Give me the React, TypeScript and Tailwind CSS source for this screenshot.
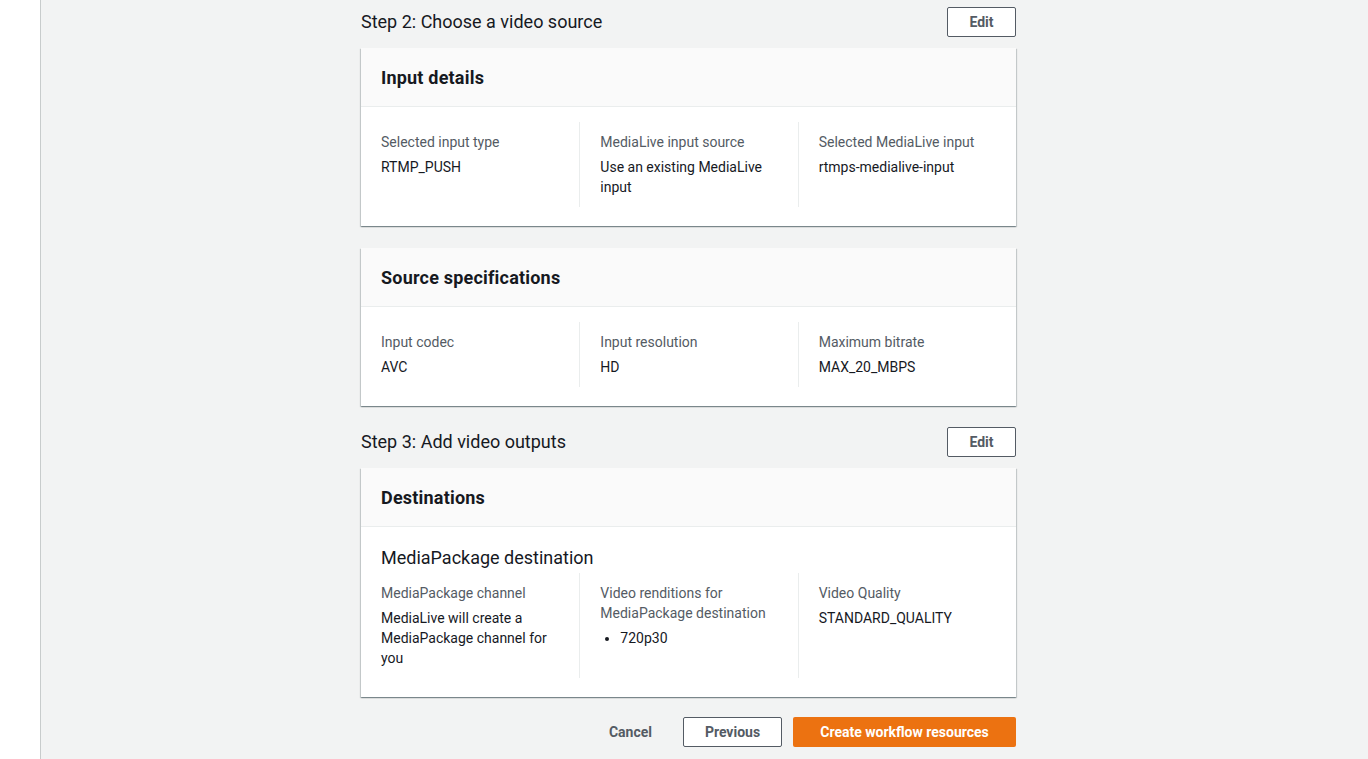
import React from "react"

type Field = {
  label: string
  value?: string
  list?: string[]
}

const cardShadow =
  "shadow-[0_1px_1px_0_rgba(0,28,36,0.3),1px_1px_1px_0_rgba(0,28,36,0.15),-1px_1px_1px_0_rgba(0,28,36,0.15)]"

function Columns({ fields }: { fields: Field[] }) {
  return (
    <div className="grid grid-cols-3">
      {fields.map((f, i) => (
        <div key={f.label} className={`px-[20px] py-[10px] ${i > 0 ? "border-l border-[#eaeded]" : ""}`}>
          <div className="text-[14px] leading-[20px] text-[#545b64] mb-[5px]">{f.label}</div>
          {f.value && <div className="text-[14px] leading-[20px] text-[#16191f]">{f.value}</div>}
          {f.list && (
            <ul className="list-disc pl-[20px] text-[14px] leading-[20px] text-[#16191f]">
              {f.list.map((item) => (
                <li key={item}>{item}</li>
              ))}
            </ul>
          )}
        </div>
      ))}
    </div>
  )
}

function Card({ title, children }: { title: string; children: React.ReactNode }) {
  return (
    <div className={`bg-white ${cardShadow}`}>
      <div className="h-[59px] flex items-center px-[20px] pt-[2px] bg-[#fafafa] border-b border-[#eaeded]">
        <h2 className="text-[18px] leading-[24px] font-bold text-[#16191f] tracking-[0.2px]">{title}</h2>
      </div>
      {children}
    </div>
  )
}

function StepHeader({ title }: { title: string }) {
  return (
    <div className="flex items-center justify-between mb-[11px]">
      <h1 className="text-[18px] leading-[24px] text-[#16191f]">{title}</h1>
      <button className="h-[30px] w-[69px] border border-[#545b64] rounded-[2px] bg-white text-[14px] font-bold text-[#545b64]">
        Edit
      </button>
    </div>
  )
}

export default function App() {
  return (
    <div className="min-h-[759px] flex bg-[#f2f3f3] font-['Roboto',sans-serif]">
      {/* collapsed side navigation */}
      <div className="w-[41px] shrink-0 bg-white border-r border-[#c8cccc]" />

      <main className="flex-1 pl-[320px] pt-[7px]">
        <div className="w-[655px]">
          <StepHeader title="Step 2: Choose a video source" />

          <Card title="Input details">
            <div className="pt-[15px] pb-[19px]">
              <Columns
                fields={[
                  { label: "Selected input type", value: "RTMP_PUSH" },
                  { label: "MediaLive input source", value: "Use an existing MediaLive input" },
                  { label: "Selected MediaLive input", value: "rtmps-medialive-input" },
                ]}
              />
            </div>
          </Card>

          <div className="mt-[22px]">
            <Card title="Source specifications">
              <div className="pt-[15px] pb-[19px]">
                <Columns
                  fields={[
                    { label: "Input codec", value: "AVC" },
                    { label: "Input resolution", value: "HD" },
                    { label: "Maximum bitrate", value: "MAX_20_MBPS" },
                  ]}
                />
              </div>
            </Card>
          </div>

          <div className="mt-[21px]">
            <StepHeader title="Step 3: Add video outputs" />
          </div>

          <Card title="Destinations">
            <div className="pt-[19px] pb-[19px]">
              <h3 className="px-[20px] text-[18px] leading-[24px] text-[#16191f] mb-[3px]">MediaPackage destination</h3>
              <Columns
                fields={[
                  { label: "MediaPackage channel", value: "MediaLive will create a MediaPackage channel for you" },
                  { label: "Video renditions for MediaPackage destination", list: ["720p30"] },
                  { label: "Video Quality", value: "STANDARD_QUALITY" },
                ]}
              />
            </div>
          </Card>

          <div className="mt-[20px] flex justify-end items-center gap-[11px]">
            <button className="h-[30px] px-[20px] text-[14px] font-bold text-[#545b64]">Cancel</button>
            <button className="h-[30px] w-[99px] border border-[#545b64] rounded-[2px] bg-white text-[14px] font-bold text-[#545b64]">
              Previous
            </button>
            <button className="h-[30px] w-[223px] rounded-[2px] bg-[#ec7211] text-[14px] font-bold text-white">
              Create workflow resources
            </button>
          </div>
        </div>
      </main>
    </div>
  )
}
